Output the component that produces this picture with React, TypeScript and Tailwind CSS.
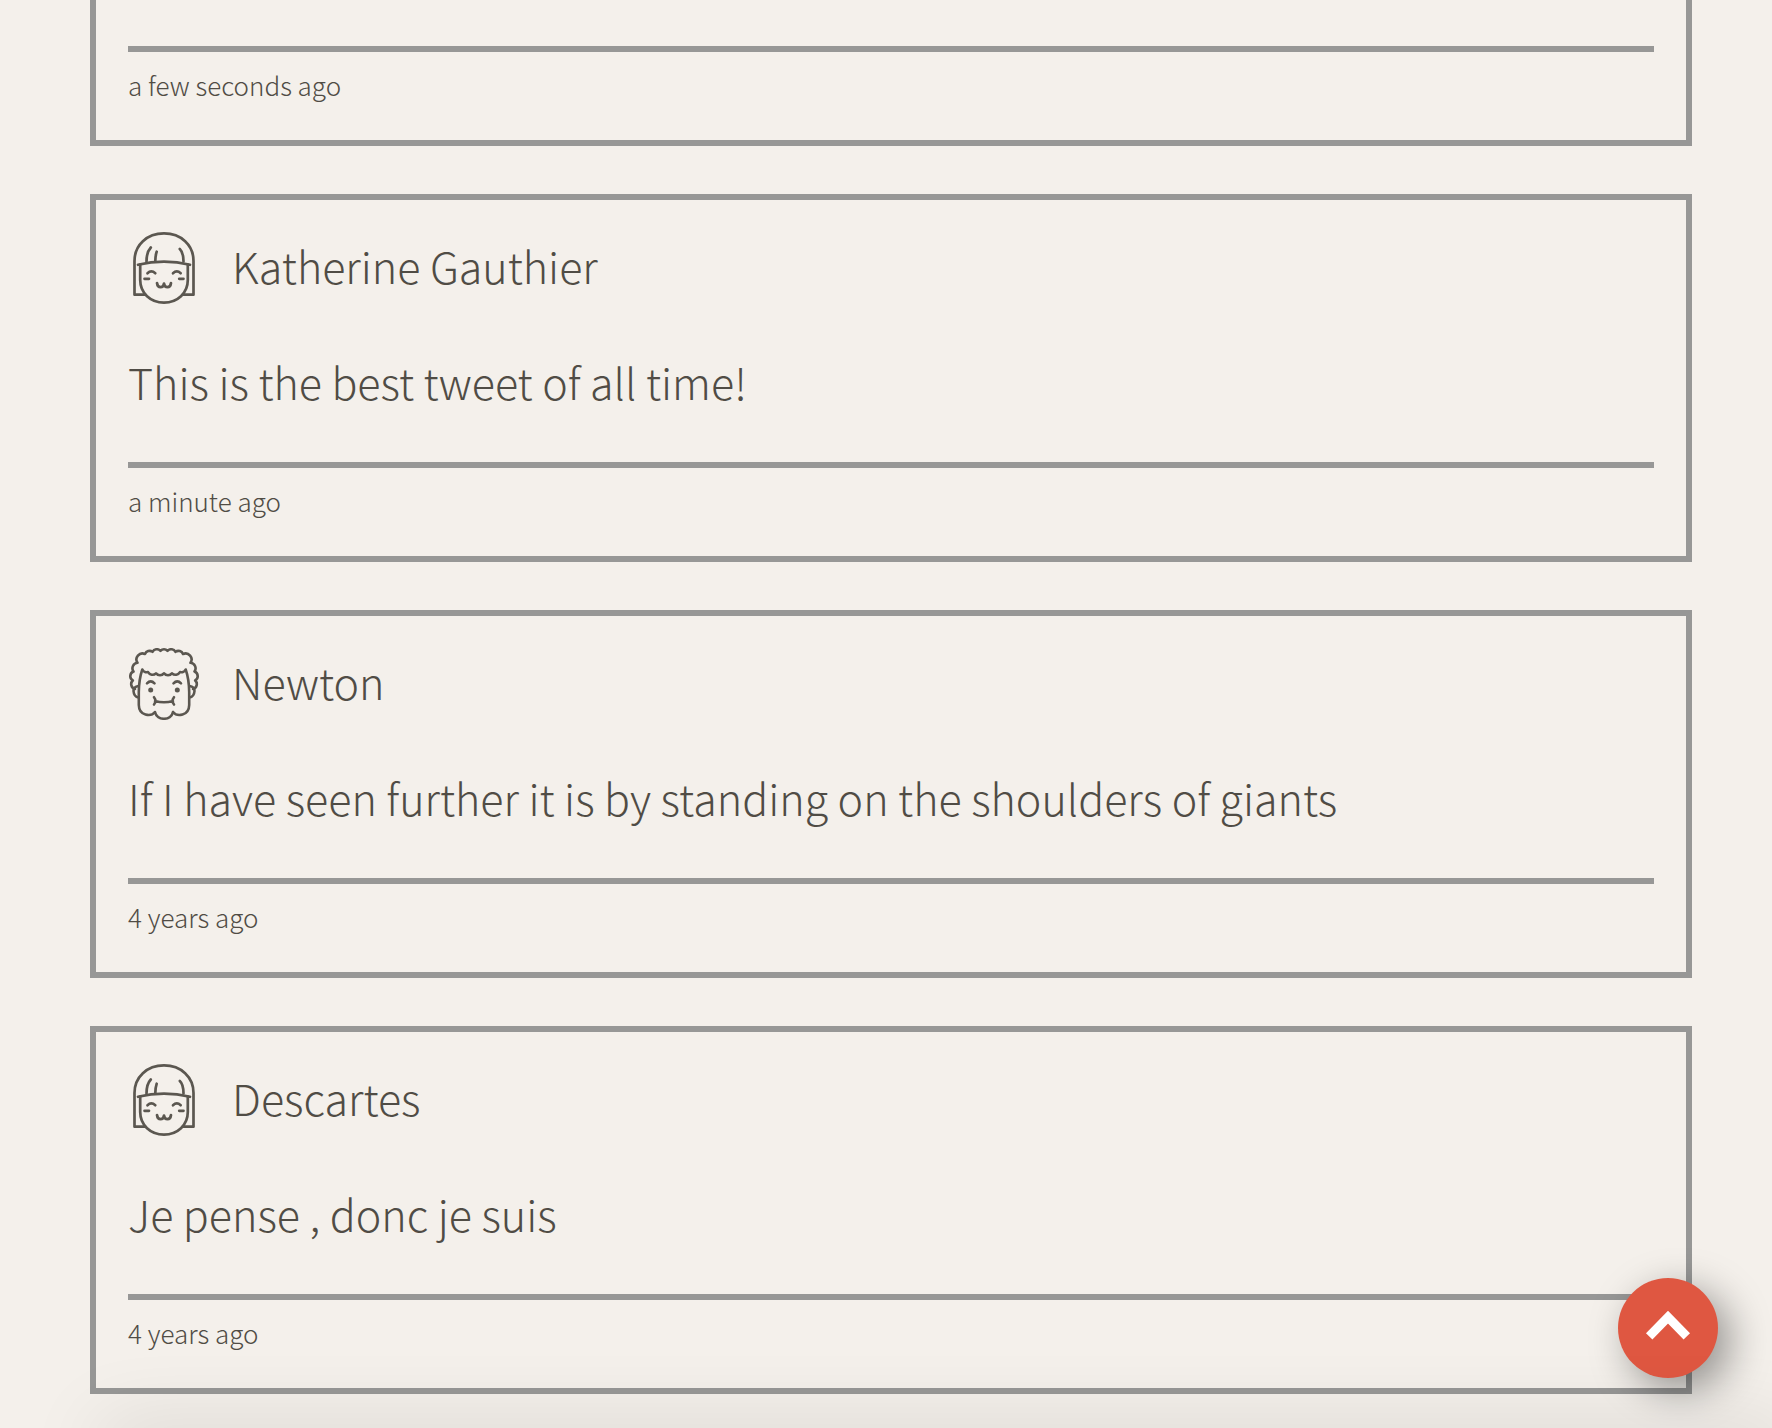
type AvatarKind = "bob" | "curly";

interface Tweet {
  author: string;
  avatar: AvatarKind;
  message: string;
  time: string;
}

const tweets: Tweet[] = [
  { author: "Katherine Gauthier", avatar: "bob", message: "This is the best tweet of all time!", time: "a minute ago" },
  {
    author: "Newton",
    avatar: "curly",
    message: "If I have seen further it is by standing on the shoulders of giants",
    time: "4 years ago",
  },
  { author: "Descartes", avatar: "bob", message: "Je pense , donc je suis", time: "4 years ago" },
];

function BobAvatar() {
  return (
    <svg viewBox="0 0 72 72" className="size-[72px] shrink-0" fill="none" stroke="#5b5750" strokeWidth="2.7" strokeLinecap="round" strokeLinejoin="round" aria-hidden="true">
      <path d="M17 62.7H6.5V29C6.5 13 19 1.4 36 1.4S65.5 13 65.5 29V62.7H55" />
      <path d="M10 32.8Q36 26.5 62 32.8" />
      <path d="M12.2 32.5V48C12.2 61 22.5 70.6 36 70.6S59.8 61 59.8 48V32.5" />
      <path d="M18.5 29.5C18.500 24 19.500 19 22.800 15.500M27.300 29C27.300 25.500 27.800 22.500 28.700 19.700M55.500 29.500C55.500 24 54.500 19.500 51.800 17" />
      <path d="M19.500 41.200Q23.300 37.600 27.300 41.200M45 41.200Q48.800 37.600 52.700 41.200M16.500 46.800H21M51.200 46.800H55.500" />
      <path d="M29 51Q29.500 55.200 32.500 55.200T36 51.500Q36.500 55.200 39.500 55.200T43 51" />
    </svg>
  );
}

function CurlyAvatar() {
  return (
    <svg viewBox="0 0 72 72" className="size-[72px] shrink-0" fill="none" stroke="#5b5750" strokeWidth="2.6" strokeLinecap="round" strokeLinejoin="round" aria-hidden="true">
      <path d="M7 41A5 5 0 0 1 4.800 32.500A5 5 0 0 1 5.500 23.500A5.500 5.500 0 0 1 9.500 14.800A6 6 0 0 1 17 6A5 5 0 0 1 24.500 3.800A5 5 0 0 1 32.500 2.800A5 5 0 0 1 39.500 2.800A5 5 0 0 1 47.500 3.800A5 5 0 0 1 55 6A6 6 0 0 1 62.500 14.800A5.500 5.500 0 0 1 66.500 23.500A5 5 0 0 1 67.200 32.500A5 5 0 0 1 65 41" />
      <path d="M10.500 38Q5.500 38.500 5.500 43Q6 49 10.500 49.500M61.500 38Q66.500 38.500 66.500 43Q66 49 61.500 49.500" />
      <path d="M10.800 57V44Q11 31 14.300 21.500A4.500 4.500 0 0 0 20 24A5 5 0 0 0 28 25.300A5 5 0 0 0 36 25.300A5 5 0 0 0 44 25.300A5 5 0 0 0 52 24A4.500 4.500 0 0 0 57.700 21.500Q61 31 61.200 44V57C61 68 49 69 45 64C43 73 29 73 27 64C23 69 11 68 10.800 57Z" />
      <path d="M19 35.300Q22.700 31.500 26.500 35.300M45.500 35.300Q49.300 31.500 53 35.300" />
      <circle cx="22.700" cy="42" r="2.500" fill="#5b5750" stroke="none" />
      <circle cx="49.300" cy="42" r="2.500" fill="#5b5750" stroke="none" />
      <path d="M27 53Q36 55.500 45 53M26 49.200Q29 53 26 56.500M46 49.200Q43 53 46 56.500" />
    </svg>
  );
}

function Timestamp({ children }: { children: string }) {
  return (
    <footer className="border-t-6 border-[#979796] pt-3 pb-0.5">
      <time className="block text-[26px] leading-[42px]">{children}</time>
    </footer>
  );
}

function TweetCard({ tweet }: { tweet: Tweet }) {
  return (
    <article className="border-6 border-[#979796] p-8">
      <header className="flex items-start gap-8">
        {tweet.avatar === "bob" ? <BobAvatar /> : <CurlyAvatar />}
        <h2 className="text-[43px] leading-[66px] font-light">{tweet.author}</h2>
      </header>
      <p className="pt-11 pb-12 text-[43px] leading-[66px]">{tweet.message}</p>
      <Timestamp>{tweet.time}</Timestamp>
    </article>
  );
}

export default function App() {
  return (
    <div className="min-h-screen overflow-x-hidden bg-[#f4f0eb] font-['Noto_Sans_CJK_SC',sans-serif] font-light text-[#504c45]">
      <main className="flex flex-col gap-12 pr-20 pb-8 pl-[90px]">
        <article className="border-6 border-t-0 border-[#979796] px-8 pt-[46px] pb-8">
          <Timestamp>a few seconds ago</Timestamp>
        </article>
        {tweets.map((tweet) => (
          <TweetCard key={tweet.author} tweet={tweet} />
        ))}
      </main>
      <button
        type="button"
        aria-label="Scroll to top"
        className="fixed right-[54px] bottom-[50px] flex size-[100px] items-center justify-center rounded-full bg-[#df5741] shadow-[12px_12px_40px_rgba(0,0,0,0.4)]"
      >
        <svg viewBox="0 0 100 100" className="size-full" fill="none" stroke="#fff" strokeWidth="9" aria-hidden="true">
          <path d="M31.200 58.300L50 39.100L68.800 58.300" />
        </svg>
      </button>
      <div className="pointer-events-none fixed right-0 -bottom-10 left-20 h-10 shadow-[20px_0_80px_rgba(0,0,0,0.14)]" />
    </div>
  );
}
